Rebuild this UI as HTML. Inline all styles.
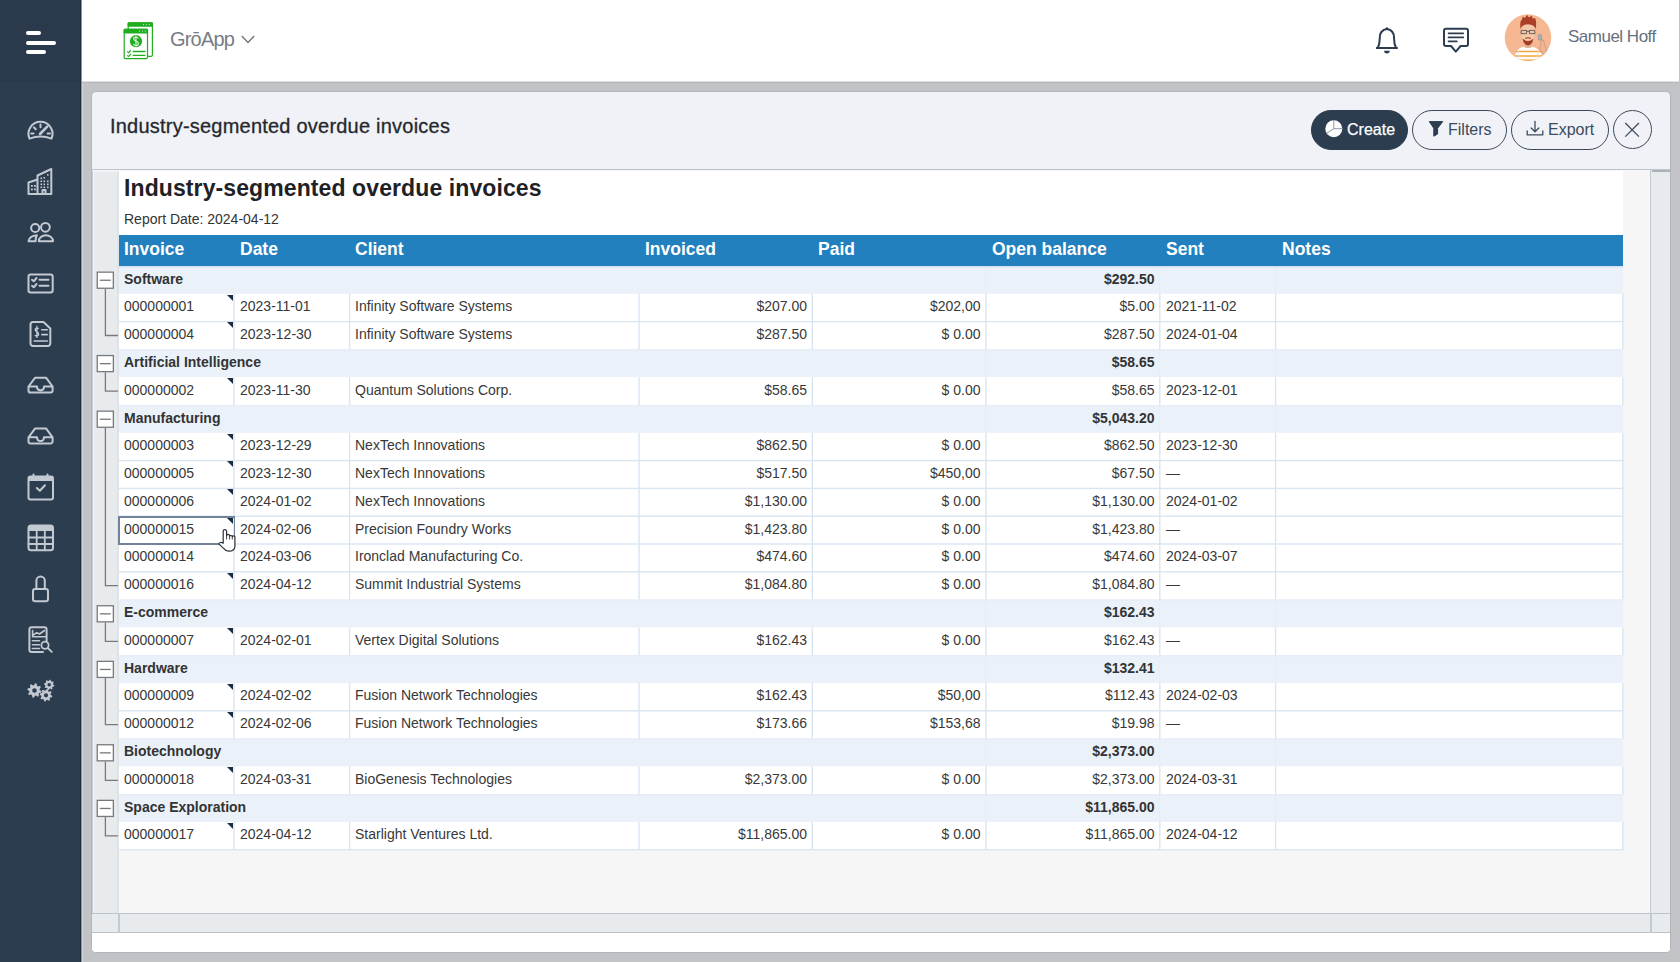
<!DOCTYPE html>
<html><head><meta charset="utf-8">
<style>
*{box-sizing:border-box;margin:0;padding:0}
html,body{width:1680px;height:962px;overflow:hidden;background:#c2c3c7;font-family:"Liberation Sans",sans-serif;}
.abs{position:absolute}
#side{position:absolute;left:0;top:0;width:81px;height:962px;background:#2d3d50;}
#side .topblk{position:absolute;left:0;top:0;width:80px;height:82px;background:#2a3a4c}
#side .edge{position:absolute;left:80px;top:0;width:1px;height:962px;background:#1f3043}
.ham{position:absolute;left:26px;height:4px;border-radius:2px;background:#fff}
.sic{position:absolute;left:24px;width:32px;height:32px}
#top{position:absolute;left:82px;top:0;width:1598px;height:81px;background:#fff}
#card{position:absolute;left:91px;top:91px;width:1580px;height:862px;background:#f0f2f7;border:1px solid #b3b5ba;border-radius:5px;overflow:hidden}
.title{position:absolute;left:110px;top:115px;letter-spacing:0.22px;font-size:20px;color:#25282c;-webkit-text-stroke:0.3px #25282c;white-space:nowrap}
.btn{position:absolute;top:110px;height:40px;border-radius:20px;border:1px solid #3b4b5d;font-size:16px;color:#3b4b5d;white-space:nowrap}
.btn span{position:absolute;top:10px}
#sheet{position:absolute;left:92px;top:170px;width:1578px;height:763px;background:#f6f6f6}
.t{position:absolute;font-size:14px;color:#383838;line-height:27px;margin-top:-0.6px;white-space:nowrap}
.t.r{text-align:right}
.grow{position:absolute;left:118px;width:1505px;background:#ebf1f8;border-top:1px solid #e3ecf5}
.gl{position:absolute;left:124px;font-size:14px;font-weight:bold;color:#333;line-height:26px;margin-top:-0.5px;white-space:nowrap}
.gt{position:absolute;font-size:14px;font-weight:bold;color:#333;line-height:26px;margin-top:-0.5px;text-align:right;white-space:nowrap}
.tri{position:absolute;width:0;height:0;border-top:6.5px solid #1b2c40;border-left:6.5px solid transparent}
.obox{position:absolute;left:96.6px;width:17.4px;height:17.4px;border:1.3px solid #78797c;background:#fff}
.obox:after{content:"";position:absolute;left:2.6px;top:7.4px;width:9.5px;height:1.2px;background:#78797c}
.ovl{position:absolute;left:104.8px;width:1.3px;background:#78797c}
.ohl{position:absolute;left:104.8px;width:13.2px;height:1.3px;background:#78797c}
</style></head>
<body>
<div id="side">
  <div class="topblk"></div>
  <div class="ham" style="top:31px;width:15px"></div>
  <div class="ham" style="top:41px;width:30px"></div>
  <div class="ham" style="top:50px;width:20px"></div>
  <div class="edge"></div>
<svg class="abs" style="left:0;top:0" width="81" height="962" viewBox="0 0 81 962" fill="none" stroke="#c3c9d1" stroke-width="2" stroke-linecap="round" stroke-linejoin="round">
  <!-- speedometer -->
  <path d="M29.5 138.6 A12 12 0 1 1 51.5 138.6 Q40.5 134.5 29.5 138.6 Z"/>
  <path d="M40.5 124.5 V127.3 M34 127.5 L35.8 129.3 M31.2 133.4 H33.6 M47.6 133.4 H50 "/>
  <path d="M40 134 L47.2 126.6" stroke-width="2.6"/>
  <!-- building -->
  <path d="M28.5 194 V182.5 L37.5 179.5 V175.5 L51.3 169 V194 Z M37.5 179.5 V194"/>
  <path d="M42.5 194 V190 H45.5 V194" />
  <g fill="#c3c9d1" stroke="none">
    <rect x="31" y="185" width="1.8" height="1.8"/><rect x="34" y="185" width="1.8" height="1.8"/>
    <rect x="31" y="188.5" width="1.8" height="1.8"/><rect x="34" y="188.5" width="1.8" height="1.8"/>
    <rect x="40.5" y="177.5" width="1.6" height="1.6"/><rect x="43.5" y="177" width="1.6" height="1.6"/><rect x="47" y="174" width="1.6" height="1.6"/>
    <rect x="40.5" y="180.5" width="1.6" height="1.6"/><rect x="43.5" y="180.5" width="1.6" height="1.6"/><rect x="47" y="180.5" width="1.6" height="1.6"/>
    <rect x="40.5" y="183.5" width="1.6" height="1.6"/><rect x="43.5" y="183.5" width="1.6" height="1.6"/><rect x="47" y="183.5" width="1.6" height="1.6"/>
    <rect x="40.5" y="186.5" width="1.6" height="1.6"/><rect x="43.5" y="186.5" width="1.6" height="1.6"/><rect x="47" y="186.5" width="1.6" height="1.6"/>
  </g>
  <!-- people -->
  <circle cx="35.2" cy="228" r="4.1"/>
  <circle cx="45.4" cy="227.3" r="4.4"/>
  <path d="M38.8 241.2 A7.1 6 0 0 1 53 241.2 Z"/>
  <path d="M36.8 235.2 Q29.5 235.8 28.5 241.2 H35.6 Q35.6 237.5 36.8 235.2 Z"/>
  <!-- checklist -->
  <rect x="28.5" y="274.5" width="24.2" height="18" rx="2.2"/>
  <path d="M32 279.8 L33.8 281.3 L36.5 278 M32 285.8 L33.8 287.3 L36.5 284 M39.5 279.8 H48.5 M39.5 285.8 H48.5"/>
  <!-- invoice doc -->
  <path d="M33 322 H43.5 L50.3 328.5 V343.5 A2.5 2.5 0 0 1 47.8 346 H33 A2.5 2.5 0 0 1 30.5 343.5 V324.5 A2.5 2.5 0 0 1 33 322 Z"/>
  <path d="M41.8 329.8 H47.3 M41.8 334.6 H47.3 M34.2 341 H47.3" stroke-width="1.6"/>
  <path d="M38.2 328.4 Q35.4 327.6 35.2 329.6 Q35.2 331.3 36.9 331.8 Q38.8 332.5 38.6 334.4 Q38.3 336.3 35.2 335.6 M36.9 326.5 V337.4" stroke-width="1.4"/>
  <!-- inbox 1 -->
  <path d="M28.5 386.5 L35 377.8 H46.2 L52.6 386.5 V390.8 A1.8 1.8 0 0 1 50.8 392.6 H30.3 A1.8 1.8 0 0 1 28.5 390.8 Z M28.5 386.5 H37 Q37 390.3 40.5 390.3 Q44 390.3 44 386.5 H52.6"/>
  <!-- inbox 2 -->
  <path d="M28.5 437.3 L35 428.6 H46.2 L52.6 437.3 V441.6 A1.8 1.8 0 0 1 50.8 443.4 H30.3 A1.8 1.8 0 0 1 28.5 441.6 Z M28.5 437.3 H37 Q37 441.1 40.5 441.1 Q44 441.1 44 437.3 H52.6"/>
  <!-- calendar -->
  <rect x="28.5" y="476.5" width="24.5" height="23" rx="2"/>
  <rect x="28.5" y="476.5" width="24.5" height="4.5" fill="#c3c9d1" stroke="none"/>
  <path d="M33.5 474.5 V477 M47.5 474.5 V477"/>
  <path d="M36.8 488 L39.8 490.8 L45 485.3"/>
  <!-- table -->
  <rect x="28.5" y="525.5" width="24.5" height="24.8" rx="2.5"/>
  <rect x="28.5" y="525.5" width="24.5" height="5.5" fill="#c3c9d1" stroke="none" rx="1.5"/>
  <path d="M28.5 537.5 H53 M28.5 544 H53 M36.7 530.5 V550 M44.8 530.5 V550" stroke-width="1.8"/>
  <!-- lock -->
  <path d="M36.4 589 V580.6 A4.2 4.2 0 0 1 44.8 580.6 V589"/>
  <rect x="33" y="589" width="15" height="12.2" rx="2.2"/>
  <!-- report -->
  <path d="M46.6 641 V629.5 A2.2 2.2 0 0 0 44.4 627.3 H31.6 A2.2 2.2 0 0 0 29.4 629.5 V649.8 A2.2 2.2 0 0 0 31.6 652 H43"/>
  <path d="M32.6 630.5 V636.8 H45.5 M33.2 635 L36.8 632.6 L39.5 634 L44.5 630.5" stroke-width="1.6"/>
  <path d="M32.4 640.8 H39.5 M32.4 644.8 H39.5 M32.4 648.5 H39.5" stroke-width="1.6"/>
  <circle cx="45" cy="645.2" r="3.6" stroke-width="1.8"/>
  <path d="M47.8 648 L51.8 651.8" stroke-width="1.8"/>
<path fill="#c3c9d1" stroke="none" fill-rule="evenodd" d="M41.67 691.21 L41.39 692.59 L39.17 693.00 L38.60 693.86 L39.07 696.07 L37.89 696.85 L36.04 695.57 L35.02 695.77 L33.79 697.67 L32.41 697.39 L32.00 695.17 L31.14 694.60 L28.93 695.07 L28.15 693.89 L29.43 692.04 L29.23 691.02 L27.33 689.79 L27.61 688.41 L29.83 688.00 L30.40 687.14 L29.93 684.93 L31.11 684.15 L32.96 685.43 L33.98 685.23 L35.21 683.33 L36.59 683.61 L37.00 685.83 L37.86 686.40 L40.07 685.93 L40.85 687.11 L39.57 688.96 L39.77 689.98 Z M32.20 690.50 a2.30 2.30 0 1 0 4.60 0 a2.30 2.30 0 1 0 -4.60 0 Z M54.37 685.31 L54.18 686.31 L52.64 686.64 L52.21 687.27 L52.50 688.82 L51.65 689.39 L50.33 688.53 L49.58 688.68 L48.69 689.97 L47.69 689.78 L47.36 688.24 L46.73 687.81 L45.18 688.10 L44.61 687.25 L45.47 685.93 L45.32 685.18 L44.03 684.29 L44.22 683.29 L45.76 682.96 L46.19 682.33 L45.90 680.78 L46.75 680.21 L48.07 681.07 L48.82 680.92 L49.71 679.63 L50.71 679.82 L51.04 681.36 L51.67 681.79 L53.22 681.50 L53.79 682.35 L52.93 683.67 L53.08 684.42 Z M47.40 684.80 a1.80 1.80 0 1 0 3.60 0 a1.80 1.80 0 1 0 -3.60 0 Z M52.27 695.92 L52.03 697.13 L50.15 697.52 L49.63 698.28 L50.00 700.17 L48.97 700.86 L47.36 699.80 L46.46 699.98 L45.38 701.57 L44.17 701.33 L43.78 699.45 L43.02 698.93 L41.13 699.30 L40.44 698.27 L41.50 696.66 L41.32 695.76 L39.73 694.68 L39.97 693.47 L41.85 693.08 L42.37 692.32 L42.00 690.43 L43.03 689.74 L44.64 690.80 L45.54 690.62 L46.62 689.03 L47.83 689.27 L48.22 691.15 L48.98 691.67 L50.87 691.30 L51.56 692.33 L50.50 693.94 L50.68 694.84 Z M43.90 695.30 a2.10 2.10 0 1 0 4.20 0 a2.10 2.10 0 1 0 -4.20 0 Z"/>
</svg>
</div>
<div id="top">
<svg class="abs" style="left:0;top:0" width="1598" height="82" viewBox="82 0 1598 82">
  <!-- logo -->
  <g fill="none" stroke="#20ad20" stroke-width="1.2">
    <rect x="128.2" y="22.8" width="24.2" height="33.5" rx="1.2"/>
  </g>
  <rect x="127.6" y="22.2" width="25.4" height="4.6" rx="1" fill="#20ad20"/>
  <rect x="124.2" y="29.4" width="23.3" height="29.3" rx="1.2" fill="#fff" stroke="#20ad20" stroke-width="1.2"/>
  <rect x="123.6" y="28.8" width="24.5" height="4.6" rx="1" fill="#20ad20"/>
      <g fill="#d9f2d9"><circle cx="139.5" cy="31.1" r="0.55"/><circle cx="142.4" cy="31.1" r="0.55"/><circle cx="145.3" cy="31.1" r="0.55"/>
  <circle cx="143.5" cy="24.5" r="0.55"/><circle cx="146.4" cy="24.5" r="0.55"/><circle cx="149.3" cy="24.5" r="0.55"/></g>
  <circle cx="136" cy="41.2" r="6.1" fill="#20ad20"/>
  <path d="M138.4 38.4 C137.8 37.3 136.8 36.9 135.8 36.9 C134.5 36.9 133.6 37.7 133.6 38.8 C133.6 41.3 138.4 40.6 138.4 43.4 C138.4 44.7 137.3 45.5 135.9 45.5 C134.8 45.5 133.8 45 133.3 44 M135.95 35.6 V46.8" fill="none" stroke="#e9f7e9" stroke-width="1.05"/>
  <path d="M127.2 51.5 L128.6 52.7 L131 50.2 M127.2 55.3 L128.6 56.5 L131 54" fill="none" stroke="#20ad20" stroke-width="1.1"/>
  <path d="M133.2 51.5 H145 M133.2 55.3 H145" stroke="#20ad20" stroke-width="1.3" stroke-linecap="round"/>
  <!-- chevron -->
  <path d="M241.8 36 L248 42.4 L254.2 36" fill="none" stroke="#70757e" stroke-width="1.4"/>
  <!-- bell -->
  <path d="M386.9 0" />
  <g fill="none" stroke="#2c3d50" stroke-width="2">
    <path d="M1377.8 48 Q1379.8 44 1379.8 37.5 Q1379.8 30.2 1386.9 29 Q1394 30.2 1394 37.5 Q1394 44 1396 48 Z" stroke-linejoin="round"/>
  </g>
  <rect x="1376" y="47" width="21.8" height="2" fill="#2c3d50"/>
  <circle cx="1386.9" cy="28.4" r="1.2" fill="#2c3d50"/>
  <path d="M1384.1 50.8 A2.8 2.8 0 0 0 1389.7 50.8 Z" fill="#2c3d50"/>
  <!-- chat -->
  <path d="M1446 28.7 H1466 A2 2 0 0 1 1468 30.7 V44 A2 2 0 0 1 1466 46 H1460.6 L1455.8 51.6 L1451 46 H1446 A2 2 0 0 1 1444 44 V30.7 A2 2 0 0 1 1446 28.7 Z" fill="none" stroke="#2c3d50" stroke-width="2" stroke-linejoin="round"/>
  <path d="M1448.6 33.3 H1463.2 M1448.6 37.4 H1463.2 M1448.6 41.4 H1456.8" stroke="#2c3d50" stroke-width="1.8" stroke-linecap="round"/>
  <!-- avatar -->
  <defs><clipPath id="av"><circle cx="1528" cy="37.6" r="23.3"/></clipPath></defs>
  <circle cx="1528" cy="37.6" r="23.3" fill="#f6b893"/>
  <g clip-path="url(#av)">
    <path d="M1514 62 Q1514 50 1522 47 L1534 47 Q1542 50 1544 62 Z" fill="#fdfdfb"/>
    <path d="M1515.5 51.5 H1543 M1514.5 56 H1544 M1514 60.3 H1544" stroke="#f2a53c" stroke-width="1.6"/>
    <path d="M1518.5 50 V62 M1538 50 V62" stroke="#e2e2ea" stroke-width="0.6"/>
    <path d="M1539.5 49 Q1541 44 1541 40 L1543.5 40 Q1545 46 1546.5 50 L1545 56 Z" fill="#eeb497" stroke="#b9826a" stroke-width="0.5"/>
    <rect x="1538.4" y="34.5" width="3.2" height="5.5" rx="0.8" fill="#a9b2bb" stroke="#6d757d" stroke-width="0.4"/>
    <rect x="1525" y="42" width="6" height="6" fill="#e8b596"/>
    <ellipse cx="1528" cy="33.5" rx="7.6" ry="9.6" fill="#f3c9a9"/>
    <ellipse cx="1520.4" cy="33.5" rx="1.4" ry="2.2" fill="#e9b592"/><ellipse cx="1535.6" cy="33.5" rx="1.4" ry="2.2" fill="#e9b592"/>
    <path d="M1522.5 38.5 Q1524 45.5 1528 45.5 Q1532 45.5 1533.5 38.5 Q1531 41 1528 41 Q1525 41 1522.5 38.5 Z" fill="#a23f2b"/>
    <path d="M1525.2 38.4 Q1528 37.2 1530.8 38.4" stroke="#a23f2b" stroke-width="1.1" fill="none"/>
    <path d="M1520.6 29 Q1519.5 21 1522 19.5 L1522.8 16.5 L1525 18 L1527 14.8 L1529 17.5 L1531.8 15.5 L1532.5 18.5 L1535 18 Q1537 22 1535.6 29 Q1534.5 24.5 1528 24.2 Q1521.8 24.5 1520.6 29 Z" fill="#ab3f27"/>
    <path d="M1521.2 30.4 H1526.6 V33.6 H1521.2 Z M1529.4 30.4 H1534.8 V33.6 H1529.4 Z M1526.6 31.2 H1529.4" fill="none" stroke="#4a4a4a" stroke-width="0.8"/>
  </g>
</svg>
<div class="abs" style="left:88px;top:27px;font-size:20px;letter-spacing:-0.8px;color:#777c85;line-height:24px;white-space:nowrap">GrōApp</div>
<div class="abs" style="left:1486px;top:26px;font-size:17px;letter-spacing:-0.5px;color:#66707c;line-height:22px;white-space:nowrap">Samuel Hoff</div>
</div>
<div id="card"></div>
<div class="title">Industry-segmented overdue invoices</div>
<div class="btn" style="left:1311px;width:97px;background:#2c3d50;border-color:#2c3d50;color:#fff"><span style="left:35px;-webkit-text-stroke:0.25px #fff">Create</span></div>
<div class="btn" style="left:1412px;width:95px"><span style="left:35px">Filters</span></div>
<div class="btn" style="left:1511px;width:98px"><span style="left:36px">Export</span></div>
<div class="btn" style="left:1613px;width:39px;border-radius:50%;height:39px"></div>
<div class="abs" style="left:92px;top:169px;width:1578px;height:1.5px;background:#bdc4cc"></div>
<div id="sheet"></div>
<div class="abs" style="left:119px;top:171px;width:1504px;height:64px;background:#fff"></div>
<div class="abs" style="left:92px;top:170.5px;width:1px;height:743px;background:#c6cdd6"></div>
<div class="abs" style="left:93px;top:171px;width:24px;height:742px;background:#e8ebee;border-left:1px solid #f2f4f6;border-top:1px solid #f2f4f6"></div>
<div class="abs" style="left:117px;top:171px;width:2px;height:742px;background:#dfe3e7"></div>
<div class="abs" style="left:124px;top:171px;letter-spacing:0.1px;font-size:23px;font-weight:bold;color:#1e2125;line-height:34px;white-space:nowrap">Industry-segmented overdue invoices</div>
<div class="abs" style="left:124px;top:210px;font-size:14px;color:#333;line-height:18px;white-space:nowrap">Report Date: 2024-04-12</div>
<div class="abs" style="left:119px;top:234.6px;width:1504px;height:31.4px;background:#2280be"></div>
<div class="abs" style="left:124px;top:235.9px;font-size:17.5px;font-weight:bold;color:#fff;line-height:26px;white-space:nowrap">Invoice</div>
<div class="abs" style="left:240px;top:235.9px;font-size:17.5px;font-weight:bold;color:#fff;line-height:26px;white-space:nowrap">Date</div>
<div class="abs" style="left:355px;top:235.9px;font-size:17.5px;font-weight:bold;color:#fff;line-height:26px;white-space:nowrap">Client</div>
<div class="abs" style="left:645px;top:235.9px;font-size:17.5px;font-weight:bold;color:#fff;line-height:26px;white-space:nowrap">Invoiced</div>
<div class="abs" style="left:818px;top:235.9px;font-size:17.5px;font-weight:bold;color:#fff;line-height:26px;white-space:nowrap">Paid</div>
<div class="abs" style="left:992px;top:235.9px;font-size:17.5px;font-weight:bold;color:#fff;line-height:26px;white-space:nowrap">Open balance</div>
<div class="abs" style="left:1166px;top:235.9px;font-size:17.5px;font-weight:bold;color:#fff;line-height:26px;white-space:nowrap">Sent</div>
<div class="abs" style="left:1282px;top:235.9px;font-size:17.5px;font-weight:bold;color:#fff;line-height:26px;white-space:nowrap">Notes</div>
<svg class="abs" style="left:0;top:0" width="1680" height="962" viewBox="0 0 1680 962"><rect x="119" y="266" width="1504" height="27.8" fill="#eaf1f9"/><rect x="985.5" y="266" width="1" height="27.8" fill="#e5edf6"/><rect x="1159.3" y="266" width="1" height="27.8" fill="#e5edf6"/><rect x="1275.1" y="266" width="1" height="27.8" fill="#e5edf6"/><rect x="119" y="293.8" width="1504" height="27.8" fill="#fff"/><rect x="119" y="321.6" width="1504" height="27.8" fill="#fff"/><rect x="119" y="349.4" width="1504" height="27.8" fill="#eaf1f9"/><rect x="119" y="349.4" width="1504" height="1" fill="#e4ecf5"/><rect x="985.5" y="349.4" width="1" height="27.8" fill="#e5edf6"/><rect x="1159.3" y="349.4" width="1" height="27.8" fill="#e5edf6"/><rect x="1275.1" y="349.4" width="1" height="27.8" fill="#e5edf6"/><rect x="119" y="377.2" width="1504" height="27.8" fill="#fff"/><rect x="119" y="405" width="1504" height="27.8" fill="#eaf1f9"/><rect x="119" y="405" width="1504" height="1" fill="#e4ecf5"/><rect x="985.5" y="405" width="1" height="27.8" fill="#e5edf6"/><rect x="1159.3" y="405" width="1" height="27.8" fill="#e5edf6"/><rect x="1275.1" y="405" width="1" height="27.8" fill="#e5edf6"/><rect x="119" y="432.8" width="1504" height="27.8" fill="#fff"/><rect x="119" y="460.6" width="1504" height="27.8" fill="#fff"/><rect x="119" y="488.4" width="1504" height="27.8" fill="#fff"/><rect x="119" y="516.2" width="1504" height="27.8" fill="#fff"/><rect x="119" y="544" width="1504" height="27.8" fill="#fff"/><rect x="119" y="571.8" width="1504" height="27.8" fill="#fff"/><rect x="119" y="599.6" width="1504" height="27.8" fill="#eaf1f9"/><rect x="119" y="599.6" width="1504" height="1" fill="#e4ecf5"/><rect x="985.5" y="599.6" width="1" height="27.8" fill="#e5edf6"/><rect x="1159.3" y="599.6" width="1" height="27.8" fill="#e5edf6"/><rect x="1275.1" y="599.6" width="1" height="27.8" fill="#e5edf6"/><rect x="119" y="627.4" width="1504" height="27.8" fill="#fff"/><rect x="119" y="655.2" width="1504" height="27.8" fill="#eaf1f9"/><rect x="119" y="655.2" width="1504" height="1" fill="#e4ecf5"/><rect x="985.5" y="655.2" width="1" height="27.8" fill="#e5edf6"/><rect x="1159.3" y="655.2" width="1" height="27.8" fill="#e5edf6"/><rect x="1275.1" y="655.2" width="1" height="27.8" fill="#e5edf6"/><rect x="119" y="683" width="1504" height="27.8" fill="#fff"/><rect x="119" y="710.8" width="1504" height="27.8" fill="#fff"/><rect x="119" y="738.6" width="1504" height="27.8" fill="#eaf1f9"/><rect x="119" y="738.6" width="1504" height="1" fill="#e4ecf5"/><rect x="985.5" y="738.6" width="1" height="27.8" fill="#e5edf6"/><rect x="1159.3" y="738.6" width="1" height="27.8" fill="#e5edf6"/><rect x="1275.1" y="738.6" width="1" height="27.8" fill="#e5edf6"/><rect x="119" y="766.4" width="1504" height="27.8" fill="#fff"/><rect x="119" y="794.2" width="1504" height="27.8" fill="#eaf1f9"/><rect x="119" y="794.2" width="1504" height="1" fill="#e4ecf5"/><rect x="985.5" y="794.2" width="1" height="27.8" fill="#e5edf6"/><rect x="1159.3" y="794.2" width="1" height="27.8" fill="#e5edf6"/><rect x="1275.1" y="794.2" width="1" height="27.8" fill="#e5edf6"/><rect x="119" y="822" width="1504" height="27.8" fill="#fff"/><rect x="233.3" y="293.8" width="1.4" height="27.8" fill="#d9e6f1"/><rect x="348.9" y="293.8" width="1.4" height="27.8" fill="#d9e6f1"/><rect x="638.3" y="293.8" width="1.4" height="27.8" fill="#d9e6f1"/><rect x="811.6" y="293.8" width="1.4" height="27.8" fill="#d9e6f1"/><rect x="985.3" y="293.8" width="1.4" height="27.8" fill="#d9e6f1"/><rect x="1159.1" y="293.8" width="1.4" height="27.8" fill="#d9e6f1"/><rect x="1274.9" y="293.8" width="1.4" height="27.8" fill="#d9e6f1"/><rect x="1622.1" y="293.8" width="1.4" height="27.8" fill="#d9e6f1"/><rect x="233.3" y="321.6" width="1.4" height="27.8" fill="#d9e6f1"/><rect x="348.9" y="321.6" width="1.4" height="27.8" fill="#d9e6f1"/><rect x="638.3" y="321.6" width="1.4" height="27.8" fill="#d9e6f1"/><rect x="811.6" y="321.6" width="1.4" height="27.8" fill="#d9e6f1"/><rect x="985.3" y="321.6" width="1.4" height="27.8" fill="#d9e6f1"/><rect x="1159.1" y="321.6" width="1.4" height="27.8" fill="#d9e6f1"/><rect x="1274.9" y="321.6" width="1.4" height="27.8" fill="#d9e6f1"/><rect x="1622.1" y="321.6" width="1.4" height="27.8" fill="#d9e6f1"/><rect x="233.3" y="377.2" width="1.4" height="27.8" fill="#d9e6f1"/><rect x="348.9" y="377.2" width="1.4" height="27.8" fill="#d9e6f1"/><rect x="638.3" y="377.2" width="1.4" height="27.8" fill="#d9e6f1"/><rect x="811.6" y="377.2" width="1.4" height="27.8" fill="#d9e6f1"/><rect x="985.3" y="377.2" width="1.4" height="27.8" fill="#d9e6f1"/><rect x="1159.1" y="377.2" width="1.4" height="27.8" fill="#d9e6f1"/><rect x="1274.9" y="377.2" width="1.4" height="27.8" fill="#d9e6f1"/><rect x="1622.1" y="377.2" width="1.4" height="27.8" fill="#d9e6f1"/><rect x="233.3" y="432.8" width="1.4" height="27.8" fill="#d9e6f1"/><rect x="348.9" y="432.8" width="1.4" height="27.8" fill="#d9e6f1"/><rect x="638.3" y="432.8" width="1.4" height="27.8" fill="#d9e6f1"/><rect x="811.6" y="432.8" width="1.4" height="27.8" fill="#d9e6f1"/><rect x="985.3" y="432.8" width="1.4" height="27.8" fill="#d9e6f1"/><rect x="1159.1" y="432.8" width="1.4" height="27.8" fill="#d9e6f1"/><rect x="1274.9" y="432.8" width="1.4" height="27.8" fill="#d9e6f1"/><rect x="1622.1" y="432.8" width="1.4" height="27.8" fill="#d9e6f1"/><rect x="233.3" y="460.6" width="1.4" height="27.8" fill="#d9e6f1"/><rect x="348.9" y="460.6" width="1.4" height="27.8" fill="#d9e6f1"/><rect x="638.3" y="460.6" width="1.4" height="27.8" fill="#d9e6f1"/><rect x="811.6" y="460.6" width="1.4" height="27.8" fill="#d9e6f1"/><rect x="985.3" y="460.6" width="1.4" height="27.8" fill="#d9e6f1"/><rect x="1159.1" y="460.6" width="1.4" height="27.8" fill="#d9e6f1"/><rect x="1274.9" y="460.6" width="1.4" height="27.8" fill="#d9e6f1"/><rect x="1622.1" y="460.6" width="1.4" height="27.8" fill="#d9e6f1"/><rect x="233.3" y="488.4" width="1.4" height="27.8" fill="#d9e6f1"/><rect x="348.9" y="488.4" width="1.4" height="27.8" fill="#d9e6f1"/><rect x="638.3" y="488.4" width="1.4" height="27.8" fill="#d9e6f1"/><rect x="811.6" y="488.4" width="1.4" height="27.8" fill="#d9e6f1"/><rect x="985.3" y="488.4" width="1.4" height="27.8" fill="#d9e6f1"/><rect x="1159.1" y="488.4" width="1.4" height="27.8" fill="#d9e6f1"/><rect x="1274.9" y="488.4" width="1.4" height="27.8" fill="#d9e6f1"/><rect x="1622.1" y="488.4" width="1.4" height="27.8" fill="#d9e6f1"/><rect x="233.3" y="516.2" width="1.4" height="27.8" fill="#d9e6f1"/><rect x="348.9" y="516.2" width="1.4" height="27.8" fill="#d9e6f1"/><rect x="638.3" y="516.2" width="1.4" height="27.8" fill="#d9e6f1"/><rect x="811.6" y="516.2" width="1.4" height="27.8" fill="#d9e6f1"/><rect x="985.3" y="516.2" width="1.4" height="27.8" fill="#d9e6f1"/><rect x="1159.1" y="516.2" width="1.4" height="27.8" fill="#d9e6f1"/><rect x="1274.9" y="516.2" width="1.4" height="27.8" fill="#d9e6f1"/><rect x="1622.1" y="516.2" width="1.4" height="27.8" fill="#d9e6f1"/><rect x="233.3" y="544" width="1.4" height="27.8" fill="#d9e6f1"/><rect x="348.9" y="544" width="1.4" height="27.8" fill="#d9e6f1"/><rect x="638.3" y="544" width="1.4" height="27.8" fill="#d9e6f1"/><rect x="811.6" y="544" width="1.4" height="27.8" fill="#d9e6f1"/><rect x="985.3" y="544" width="1.4" height="27.8" fill="#d9e6f1"/><rect x="1159.1" y="544" width="1.4" height="27.8" fill="#d9e6f1"/><rect x="1274.9" y="544" width="1.4" height="27.8" fill="#d9e6f1"/><rect x="1622.1" y="544" width="1.4" height="27.8" fill="#d9e6f1"/><rect x="233.3" y="571.8" width="1.4" height="27.8" fill="#d9e6f1"/><rect x="348.9" y="571.8" width="1.4" height="27.8" fill="#d9e6f1"/><rect x="638.3" y="571.8" width="1.4" height="27.8" fill="#d9e6f1"/><rect x="811.6" y="571.8" width="1.4" height="27.8" fill="#d9e6f1"/><rect x="985.3" y="571.8" width="1.4" height="27.8" fill="#d9e6f1"/><rect x="1159.1" y="571.8" width="1.4" height="27.8" fill="#d9e6f1"/><rect x="1274.9" y="571.8" width="1.4" height="27.8" fill="#d9e6f1"/><rect x="1622.1" y="571.8" width="1.4" height="27.8" fill="#d9e6f1"/><rect x="233.3" y="627.4" width="1.4" height="27.8" fill="#d9e6f1"/><rect x="348.9" y="627.4" width="1.4" height="27.8" fill="#d9e6f1"/><rect x="638.3" y="627.4" width="1.4" height="27.8" fill="#d9e6f1"/><rect x="811.6" y="627.4" width="1.4" height="27.8" fill="#d9e6f1"/><rect x="985.3" y="627.4" width="1.4" height="27.8" fill="#d9e6f1"/><rect x="1159.1" y="627.4" width="1.4" height="27.8" fill="#d9e6f1"/><rect x="1274.9" y="627.4" width="1.4" height="27.8" fill="#d9e6f1"/><rect x="1622.1" y="627.4" width="1.4" height="27.8" fill="#d9e6f1"/><rect x="233.3" y="683" width="1.4" height="27.8" fill="#d9e6f1"/><rect x="348.9" y="683" width="1.4" height="27.8" fill="#d9e6f1"/><rect x="638.3" y="683" width="1.4" height="27.8" fill="#d9e6f1"/><rect x="811.6" y="683" width="1.4" height="27.8" fill="#d9e6f1"/><rect x="985.3" y="683" width="1.4" height="27.8" fill="#d9e6f1"/><rect x="1159.1" y="683" width="1.4" height="27.8" fill="#d9e6f1"/><rect x="1274.9" y="683" width="1.4" height="27.8" fill="#d9e6f1"/><rect x="1622.1" y="683" width="1.4" height="27.8" fill="#d9e6f1"/><rect x="233.3" y="710.8" width="1.4" height="27.8" fill="#d9e6f1"/><rect x="348.9" y="710.8" width="1.4" height="27.8" fill="#d9e6f1"/><rect x="638.3" y="710.8" width="1.4" height="27.8" fill="#d9e6f1"/><rect x="811.6" y="710.8" width="1.4" height="27.8" fill="#d9e6f1"/><rect x="985.3" y="710.8" width="1.4" height="27.8" fill="#d9e6f1"/><rect x="1159.1" y="710.8" width="1.4" height="27.8" fill="#d9e6f1"/><rect x="1274.9" y="710.8" width="1.4" height="27.8" fill="#d9e6f1"/><rect x="1622.1" y="710.8" width="1.4" height="27.8" fill="#d9e6f1"/><rect x="233.3" y="766.4" width="1.4" height="27.8" fill="#d9e6f1"/><rect x="348.9" y="766.4" width="1.4" height="27.8" fill="#d9e6f1"/><rect x="638.3" y="766.4" width="1.4" height="27.8" fill="#d9e6f1"/><rect x="811.6" y="766.4" width="1.4" height="27.8" fill="#d9e6f1"/><rect x="985.3" y="766.4" width="1.4" height="27.8" fill="#d9e6f1"/><rect x="1159.1" y="766.4" width="1.4" height="27.8" fill="#d9e6f1"/><rect x="1274.9" y="766.4" width="1.4" height="27.8" fill="#d9e6f1"/><rect x="1622.1" y="766.4" width="1.4" height="27.8" fill="#d9e6f1"/><rect x="233.3" y="822" width="1.4" height="27.8" fill="#d9e6f1"/><rect x="348.9" y="822" width="1.4" height="27.8" fill="#d9e6f1"/><rect x="638.3" y="822" width="1.4" height="27.8" fill="#d9e6f1"/><rect x="811.6" y="822" width="1.4" height="27.8" fill="#d9e6f1"/><rect x="985.3" y="822" width="1.4" height="27.8" fill="#d9e6f1"/><rect x="1159.1" y="822" width="1.4" height="27.8" fill="#d9e6f1"/><rect x="1274.9" y="822" width="1.4" height="27.8" fill="#d9e6f1"/><rect x="1622.1" y="822" width="1.4" height="27.8" fill="#d9e6f1"/><rect x="119" y="266" width="1504" height="1.6" fill="#d6e3ef"/><rect x="119" y="320.9" width="1504.5" height="1.4" fill="#d9e6f1"/><rect x="119" y="459.9" width="1504.5" height="1.4" fill="#d9e6f1"/><rect x="119" y="487.7" width="1504.5" height="1.4" fill="#d9e6f1"/><rect x="119" y="515.5" width="1504.5" height="1.4" fill="#d9e6f1"/><rect x="119" y="543.3" width="1504.5" height="1.4" fill="#d9e6f1"/><rect x="119" y="571.1" width="1504.5" height="1.4" fill="#d9e6f1"/><rect x="119" y="710.1" width="1504.5" height="1.4" fill="#d9e6f1"/><rect x="119" y="849.1" width="1504.5" height="1.4" fill="#d9e6f1"/></svg>
<div class="gl" style="top:266px">Software</div>
<div class="gt" style="top:266px;left:986px;width:168.5px">$292.50</div>
<div class="t" style="left:124px;top:293.8px">000000001</div>
<div class="t" style="left:240px;top:293.8px">2023-11-01</div>
<div class="t" style="left:355px;top:293.8px">Infinity Software Systems</div>
<div class="t r" style="left:647px;width:160px;top:293.8px">$207.00</div>
<div class="t r" style="left:820.5px;width:160px;top:293.8px">$202,00</div>
<div class="t r" style="left:994.5px;width:160px;top:293.8px">$5.00</div>
<div class="t" style="left:1166px;top:293.8px">2021-11-02</div>
<div class="tri" style="left:227.2px;top:294.6px"></div>
<div class="t" style="left:124px;top:321.6px">000000004</div>
<div class="t" style="left:240px;top:321.6px">2023-12-30</div>
<div class="t" style="left:355px;top:321.6px">Infinity Software Systems</div>
<div class="t r" style="left:647px;width:160px;top:321.6px">$287.50</div>
<div class="t r" style="left:820.5px;width:160px;top:321.6px">$ 0.00</div>
<div class="t r" style="left:994.5px;width:160px;top:321.6px">$287.50</div>
<div class="t" style="left:1166px;top:321.6px">2024-01-04</div>
<div class="tri" style="left:227.2px;top:322.4px"></div>
<div class="gl" style="top:349.4px">Artificial Intelligence</div>
<div class="gt" style="top:349.4px;left:986px;width:168.5px">$58.65</div>
<div class="t" style="left:124px;top:377.2px">000000002</div>
<div class="t" style="left:240px;top:377.2px">2023-11-30</div>
<div class="t" style="left:355px;top:377.2px">Quantum Solutions Corp.</div>
<div class="t r" style="left:647px;width:160px;top:377.2px">$58.65</div>
<div class="t r" style="left:820.5px;width:160px;top:377.2px">$ 0.00</div>
<div class="t r" style="left:994.5px;width:160px;top:377.2px">$58.65</div>
<div class="t" style="left:1166px;top:377.2px">2023-12-01</div>
<div class="tri" style="left:227.2px;top:378px"></div>
<div class="gl" style="top:405px">Manufacturing</div>
<div class="gt" style="top:405px;left:986px;width:168.5px">$5,043.20</div>
<div class="t" style="left:124px;top:432.8px">000000003</div>
<div class="t" style="left:240px;top:432.8px">2023-12-29</div>
<div class="t" style="left:355px;top:432.8px">NexTech Innovations</div>
<div class="t r" style="left:647px;width:160px;top:432.8px">$862.50</div>
<div class="t r" style="left:820.5px;width:160px;top:432.8px">$ 0.00</div>
<div class="t r" style="left:994.5px;width:160px;top:432.8px">$862.50</div>
<div class="t" style="left:1166px;top:432.8px">2023-12-30</div>
<div class="tri" style="left:227.2px;top:433.6px"></div>
<div class="t" style="left:124px;top:460.6px">000000005</div>
<div class="t" style="left:240px;top:460.6px">2023-12-30</div>
<div class="t" style="left:355px;top:460.6px">NexTech Innovations</div>
<div class="t r" style="left:647px;width:160px;top:460.6px">$517.50</div>
<div class="t r" style="left:820.5px;width:160px;top:460.6px">$450,00</div>
<div class="t r" style="left:994.5px;width:160px;top:460.6px">$67.50</div>
<div class="t" style="left:1166px;top:460.6px">—</div>
<div class="tri" style="left:227.2px;top:461.4px"></div>
<div class="t" style="left:124px;top:488.4px">000000006</div>
<div class="t" style="left:240px;top:488.4px">2024-01-02</div>
<div class="t" style="left:355px;top:488.4px">NexTech Innovations</div>
<div class="t r" style="left:647px;width:160px;top:488.4px">$1,130.00</div>
<div class="t r" style="left:820.5px;width:160px;top:488.4px">$ 0.00</div>
<div class="t r" style="left:994.5px;width:160px;top:488.4px">$1,130.00</div>
<div class="t" style="left:1166px;top:488.4px">2024-01-02</div>
<div class="tri" style="left:227.2px;top:489.2px"></div>
<div class="t" style="left:124px;top:516.2px">000000015</div>
<div class="t" style="left:240px;top:516.2px">2024-02-06</div>
<div class="t" style="left:355px;top:516.2px">Precision Foundry Works</div>
<div class="t r" style="left:647px;width:160px;top:516.2px">$1,423.80</div>
<div class="t r" style="left:820.5px;width:160px;top:516.2px">$ 0.00</div>
<div class="t r" style="left:994.5px;width:160px;top:516.2px">$1,423.80</div>
<div class="t" style="left:1166px;top:516.2px">—</div>
<div class="tri" style="left:227.2px;top:517px"></div>
<div class="t" style="left:124px;top:544px">000000014</div>
<div class="t" style="left:240px;top:544px">2024-03-06</div>
<div class="t" style="left:355px;top:544px">Ironclad Manufacturing Co.</div>
<div class="t r" style="left:647px;width:160px;top:544px">$474.60</div>
<div class="t r" style="left:820.5px;width:160px;top:544px">$ 0.00</div>
<div class="t r" style="left:994.5px;width:160px;top:544px">$474.60</div>
<div class="t" style="left:1166px;top:544px">2024-03-07</div>
<div class="t" style="left:124px;top:571.8px">000000016</div>
<div class="t" style="left:240px;top:571.8px">2024-04-12</div>
<div class="t" style="left:355px;top:571.8px">Summit Industrial Systems</div>
<div class="t r" style="left:647px;width:160px;top:571.8px">$1,084.80</div>
<div class="t r" style="left:820.5px;width:160px;top:571.8px">$ 0.00</div>
<div class="t r" style="left:994.5px;width:160px;top:571.8px">$1,084.80</div>
<div class="t" style="left:1166px;top:571.8px">—</div>
<div class="tri" style="left:227.2px;top:572.6px"></div>
<div class="gl" style="top:599.6px">E-commerce</div>
<div class="gt" style="top:599.6px;left:986px;width:168.5px">$162.43</div>
<div class="t" style="left:124px;top:627.4px">000000007</div>
<div class="t" style="left:240px;top:627.4px">2024-02-01</div>
<div class="t" style="left:355px;top:627.4px">Vertex Digital Solutions</div>
<div class="t r" style="left:647px;width:160px;top:627.4px">$162.43</div>
<div class="t r" style="left:820.5px;width:160px;top:627.4px">$ 0.00</div>
<div class="t r" style="left:994.5px;width:160px;top:627.4px">$162.43</div>
<div class="t" style="left:1166px;top:627.4px">—</div>
<div class="tri" style="left:227.2px;top:628.2px"></div>
<div class="gl" style="top:655.2px">Hardware</div>
<div class="gt" style="top:655.2px;left:986px;width:168.5px">$132.41</div>
<div class="t" style="left:124px;top:683px">000000009</div>
<div class="t" style="left:240px;top:683px">2024-02-02</div>
<div class="t" style="left:355px;top:683px">Fusion Network Technologies</div>
<div class="t r" style="left:647px;width:160px;top:683px">$162.43</div>
<div class="t r" style="left:820.5px;width:160px;top:683px">$50,00</div>
<div class="t r" style="left:994.5px;width:160px;top:683px">$112.43</div>
<div class="t" style="left:1166px;top:683px">2024-02-03</div>
<div class="tri" style="left:227.2px;top:683.8px"></div>
<div class="t" style="left:124px;top:710.8px">000000012</div>
<div class="t" style="left:240px;top:710.8px">2024-02-06</div>
<div class="t" style="left:355px;top:710.8px">Fusion Network Technologies</div>
<div class="t r" style="left:647px;width:160px;top:710.8px">$173.66</div>
<div class="t r" style="left:820.5px;width:160px;top:710.8px">$153,68</div>
<div class="t r" style="left:994.5px;width:160px;top:710.8px">$19.98</div>
<div class="t" style="left:1166px;top:710.8px">—</div>
<div class="tri" style="left:227.2px;top:711.6px"></div>
<div class="gl" style="top:738.6px">Biotechnology</div>
<div class="gt" style="top:738.6px;left:986px;width:168.5px">$2,373.00</div>
<div class="t" style="left:124px;top:766.4px">000000018</div>
<div class="t" style="left:240px;top:766.4px">2024-03-31</div>
<div class="t" style="left:355px;top:766.4px">BioGenesis Technologies</div>
<div class="t r" style="left:647px;width:160px;top:766.4px">$2,373.00</div>
<div class="t r" style="left:820.5px;width:160px;top:766.4px">$ 0.00</div>
<div class="t r" style="left:994.5px;width:160px;top:766.4px">$2,373.00</div>
<div class="t" style="left:1166px;top:766.4px">2024-03-31</div>
<div class="tri" style="left:227.2px;top:767.2px"></div>
<div class="gl" style="top:794.2px">Space Exploration</div>
<div class="gt" style="top:794.2px;left:986px;width:168.5px">$11,865.00</div>
<div class="t" style="left:124px;top:822px">000000017</div>
<div class="t" style="left:240px;top:822px">2024-04-12</div>
<div class="t" style="left:355px;top:822px">Starlight Ventures Ltd.</div>
<div class="t r" style="left:647px;width:160px;top:822px">$11,865.00</div>
<div class="t r" style="left:820.5px;width:160px;top:822px">$ 0.00</div>
<div class="t r" style="left:994.5px;width:160px;top:822px">$11,865.00</div>
<div class="t" style="left:1166px;top:822px">2024-04-12</div>
<div class="tri" style="left:227.2px;top:822.8px"></div>
<svg class="abs" style="left:0;top:0" width="1680" height="962" viewBox="0 0 1680 962"><path d="M105.4 288.9 V335.5 H118" fill="none" stroke="#78797c" stroke-width="1.3"/><rect x="97.25" y="272.15" width="16.1" height="16.1" fill="#fff" stroke="#78797c" stroke-width="1.3"/><rect x="99.8" y="279.6" width="11" height="1.3" fill="#78797c"/><path d="M105.4 372.3 V391.1 H118" fill="none" stroke="#78797c" stroke-width="1.3"/><rect x="97.25" y="355.55" width="16.1" height="16.1" fill="#fff" stroke="#78797c" stroke-width="1.3"/><rect x="99.8" y="363" width="11" height="1.3" fill="#78797c"/><path d="M105.4 427.9 V585.7 H118" fill="none" stroke="#78797c" stroke-width="1.3"/><rect x="97.25" y="411.15" width="16.1" height="16.1" fill="#fff" stroke="#78797c" stroke-width="1.3"/><rect x="99.8" y="418.6" width="11" height="1.3" fill="#78797c"/><path d="M105.4 622.5 V641.3 H118" fill="none" stroke="#78797c" stroke-width="1.3"/><rect x="97.25" y="605.75" width="16.1" height="16.1" fill="#fff" stroke="#78797c" stroke-width="1.3"/><rect x="99.8" y="613.2" width="11" height="1.3" fill="#78797c"/><path d="M105.4 678.1 V724.7 H118" fill="none" stroke="#78797c" stroke-width="1.3"/><rect x="97.25" y="661.35" width="16.1" height="16.1" fill="#fff" stroke="#78797c" stroke-width="1.3"/><rect x="99.8" y="668.8" width="11" height="1.3" fill="#78797c"/><path d="M105.4 761.5 V780.3 H118" fill="none" stroke="#78797c" stroke-width="1.3"/><rect x="97.25" y="744.75" width="16.1" height="16.1" fill="#fff" stroke="#78797c" stroke-width="1.3"/><rect x="99.8" y="752.2" width="11" height="1.3" fill="#78797c"/><path d="M105.4 817.1 V835.9 H118" fill="none" stroke="#78797c" stroke-width="1.3"/><rect x="97.25" y="800.35" width="16.1" height="16.1" fill="#fff" stroke="#78797c" stroke-width="1.3"/><rect x="99.8" y="807.8" width="11" height="1.3" fill="#78797c"/></svg>
<div class="abs" style="left:118px;top:516px;width:116.5px;height:29px;border:2px solid #718398;border-right-width:1.5px"></div>
<div class="tri" style="left:227.2px;top:517.5px"></div>
<svg class="abs" style="left:0;top:0" width="1680" height="962" viewBox="0 0 1680 962">
<path d="M223.2 542.5 V531.3 A1.7 1.7 0 0 1 226.6 531.3 V535.8 A1.5 1.5 0 0 1 229.6 535.8 V536.4 A1.4 1.4 0 0 1 232.3 536.8 A1.3 1.3 0 0 1 234.9 537.8 V546.5 Q234.6 551.2 228.7 551.2 Q225.8 551.2 223.9 548.6 L218.8 543.9 Q219.8 541.4 223.2 543.2 Z" fill="#fff" stroke="#2b2d38" stroke-width="1.2" stroke-linejoin="round"/>
<path d="M226.6 535.8 V539.5 M229.6 536.4 V539.5 M232.3 536.8 V539.5" stroke="#2b2d38" stroke-width="0.9"/>
</svg>
<svg class="abs" style="left:0;top:0;pointer-events:none" width="1680" height="962" viewBox="0 0 1680 962">
  <!-- create pie -->
  <circle cx="1333.8" cy="128.7" r="8.5" fill="#fff"/>
  <path d="M1333.8 120.2 V128.7 L1326.6 133.2 M1333.8 128.7 H1342.3" stroke="#8c97a3" stroke-width="1" fill="none"/>
  <!-- funnel -->
  <path d="M1429.3 121.6 H1442.7 L1437.6 128.3 V134 L1433.8 136.2 V128.3 Z" fill="#2c3d50" stroke="#2c3d50" stroke-width="1" stroke-linejoin="round"/>
  <!-- download -->
  <path d="M1535 121.5 V131.5 M1531.2 128 L1535 131.8 L1538.8 128 M1527.2 130.8 V134.8 H1542.8 V130.8" fill="none" stroke="#3b4b5d" stroke-width="1.3" stroke-linecap="round" stroke-linejoin="round"/>
  <!-- close X -->
  <path d="M1625.3 123 L1638.9 136.6 M1638.9 123 L1625.3 136.6" stroke="#3b4b5d" stroke-width="1.3"/>
</svg>
<div class="abs" style="left:82px;top:81px;width:1598px;height:1px;background:#dedfe2"></div>
<div class="abs" style="left:82px;top:82px;width:1598px;height:1px;background:#b8b9bd"></div>
<div class="abs" style="left:1679px;top:0;width:1px;height:962px;background:#c4c5c9"></div>
<div class="abs" style="left:81px;top:0;width:1px;height:962px;background:#8a929b"></div>
<div class="abs" style="left:82px;top:83px;width:1px;height:879px;background:#d3d4d6"></div>
<!-- scrollbars -->
<div class="abs" style="left:1650.2px;top:170px;width:20px;height:763px;background:#e8ebee;border-left:1.5px solid #c3c9d1"></div>
<div class="abs" style="left:1651.7px;top:170px;width:18.5px;height:1.6px;background:#a9b1bb"></div>
<div class="abs" style="left:92px;top:912.9px;width:1578px;height:20px;background:#e8ebee;border-top:1px solid #bcc3cb;border-bottom:1px solid #bcc3cb"></div>
<div class="abs" style="left:118px;top:913px;width:1.5px;height:19.5px;background:#c3c9d1"></div>
<div class="abs" style="left:1650.2px;top:913px;width:1.5px;height:19.5px;background:#c3c9d1"></div>
<div class="abs" style="left:92px;top:933px;width:1578px;height:19px;background:#fff;border-radius:0 0 4px 4px"></div>
</body></html>
